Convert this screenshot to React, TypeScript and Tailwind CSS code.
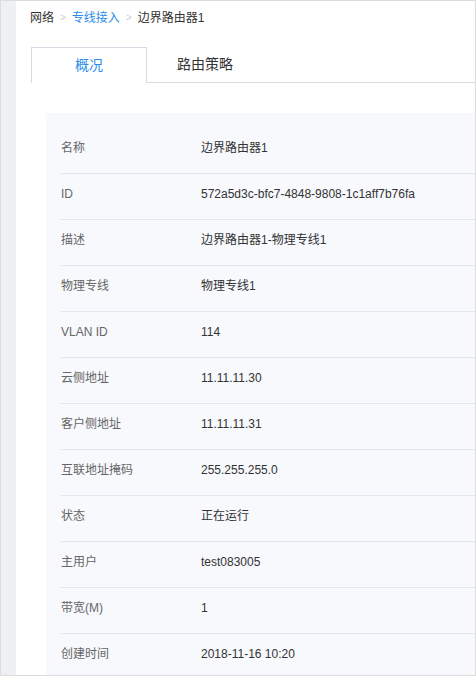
import React from 'react';

const font = { fontFamily: '"Liberation Sans", Arial, "Noto Sans CJK SC", sans-serif' };

const rows: { label: string; value: string }[] = [
  { label: '名称', value: '边界路由器1' },
  { label: 'ID', value: '572a5d3c-bfc7-4848-9808-1c1aff7b76fa' },
  { label: '描述', value: '边界路由器1-物理专线1' },
  { label: '物理专线', value: '物理专线1' },
  { label: 'VLAN ID', value: '114' },
  { label: '云侧地址', value: '11.11.11.30' },
  { label: '客户侧地址', value: '11.11.11.31' },
  { label: '互联地址掩码', value: '255.255.255.0' },
  { label: '状态', value: '正在运行' },
  { label: '主用户', value: 'test083005' },
  { label: '带宽(M)', value: '1' },
  { label: '创建时间', value: '2018-11-16 10:20' },
];

export default function App() {
  return (
    <div
      className="w-[476px] h-[676px] border border-[#dcdcdc] flex overflow-hidden bg-white"
      style={font}
    >
      {/* left strip */}
      <div className="w-[15px] shrink-0 bg-[#eef0f4]" />

      <div className="flex-1 flex flex-col min-w-0">
        {/* Breadcrumb */}
        <div className="shrink-0 flex items-center pl-[14px] pt-[9px] h-[25px] text-[12px] leading-[16px]">
          <span className="text-[#333]">网络</span>
          <span className="text-[#c8cdd3] text-[10px] mx-[6px]">&gt;</span>
          <span className="text-[#2d8ceb]">专线接入</span>
          <span className="text-[#c8cdd3] text-[10px] mx-[6px]">&gt;</span>
          <span className="text-[#333]">边界路由器1</span>
        </div>

        {/* Tabs */}
        <div className="shrink-0 flex mt-[21px] pl-[15px] h-[36px]">
          <div className="w-[116px] border-t border-l border-r border-[#d5dbe2] flex items-center justify-center text-[14px] text-[#2d8ceb]">
            概况
          </div>
          <div className="w-[116px] border-b border-[#d5dbe2] flex items-center justify-center text-[14px] text-[#333]">
            路由策略
          </div>
          <div className="flex-1 border-b border-[#d5dbe2]" />
        </div>

        {/* Detail panel */}
        <div className="shrink-0 mt-[30px] ml-[30px] bg-[#f7f9fd] pt-[15px] pl-[15px]">
          {rows.map((r, i) => (
            <div
              key={r.label}
              className={`flex items-center h-[46px] pb-[6px] text-[12px] ${
                i < rows.length - 1 ? 'border-b border-[#e3e6ec]' : ''
              }`}
            >
              <div className="w-[140px] shrink-0 text-[#666]">{r.label}</div>
              <div className="text-[#333] whitespace-nowrap">{r.value}</div>
            </div>
          ))}
        </div>
      </div>
    </div>
  );
}
